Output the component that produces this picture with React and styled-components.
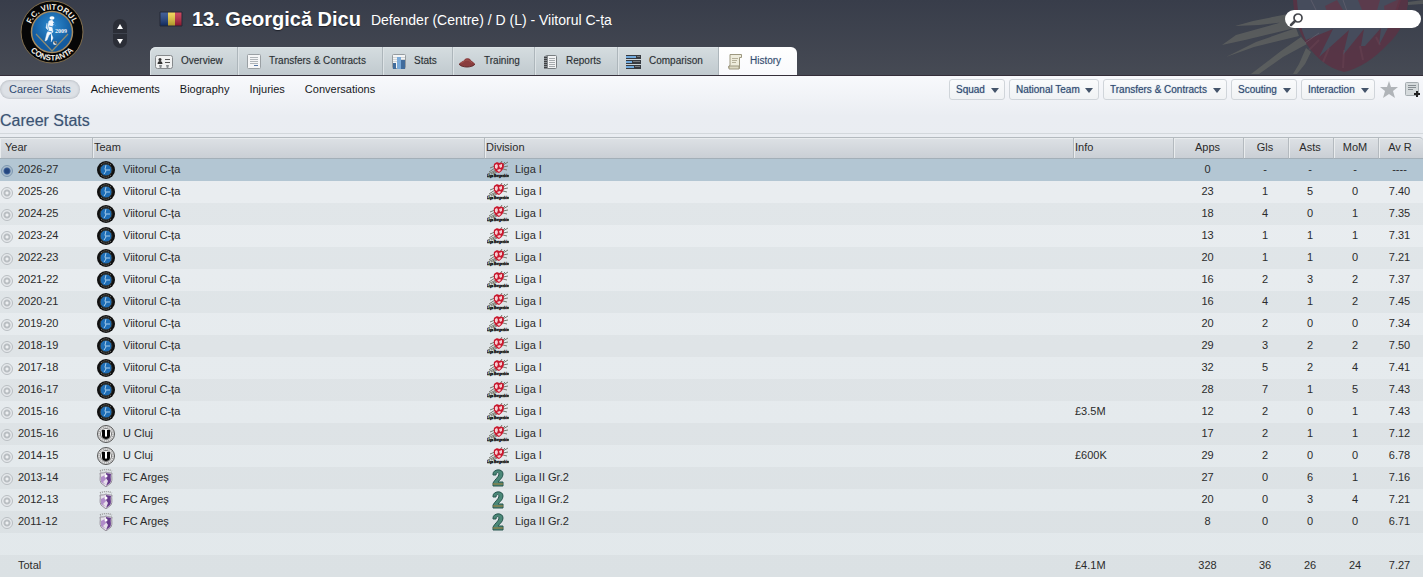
import React, { useState } from "react";
import styled, { createGlobalStyle, ThemeProvider } from "styled-components";

const theme = {
    colors: {
        text: "#2b2b2b",
        link: "#2f4b73",
        selected: "#b3c6d3",
        line: "#b4babf",
    },
};

const GlobalStyle = createGlobalStyle`
    * {
        box-sizing: border-box;
    }
    body {
        margin: 0;
        font-family: "Liberation Sans", Arial, sans-serif;
        font-size: 11px;
        color: ${theme.colors.text};
        background: #e2e8eb;
    }
    button, input, select {
        font-family: inherit;
    }
`;

const Header = styled.header`
    position: relative;
    display: flex;
    height: 76px;
    overflow: hidden;
    background: linear-gradient(#383d4a, #464a54);
    border-bottom: 1px solid #352f3a;
`;

const HeaderArt = styled.svg`
    position: absolute;
    top: 0;
    right: 0;
`;

const ClubLogo = styled.div`
    width: 64px;
    margin-left: 20px;
`;

const Stepper = styled.div`
    display: flex;
    flex-direction: column;
    gap: 1px;
    width: 14px;
    margin: 19px 23px 0 29px;
`;

const StepButton = styled.button`
    display: flex;
    align-items: center;
    justify-content: center;
    height: 14px;
    padding: 0;
    border: 0;
    background: #2b2e37;
    border-radius: ${({ $down }) => ($down ? "0 0 7px 7px" : "7px 7px 0 0")};
`;

const HeaderMain = styled.div`
    display: flex;
    flex: 1;
    flex-direction: column;
    justify-content: space-between;
    height: 76px;
`;

const TitleRow = styled.div`
    display: flex;
    align-items: center;
    height: 38px;
    padding-left: 9px;
    color: #fff;
    white-space: nowrap;
`;

const PlayerName = styled.h1`
    margin: 0 10px 0 9px;
    font-size: 20px;
    line-height: 24px;
    text-shadow: 0 1px 1px #1d2029;
`;

const PlayerRole = styled.span`
    padding-top: 2px;
    font-size: 14px;
`;

const Tabs = styled.nav`
    display: flex;
    height: 29px;
`;

const Tab = styled.a`
    display: flex;
    align-items: center;
    gap: 6px;
    min-width: ${({ $width }) => $width}px;
    padding: 0 12px 0 5px;
    font-size: 10px;
    text-decoration: none;
    white-space: nowrap;
    text-shadow: 0 0 1px #2b2b2b44;
    color: ${({ $active, theme }) => ($active ? theme.colors.link : "#292e33")};
    background: ${({ $active }) =>
        $active ? "linear-gradient(#ffffff, #f8f9fc)" : "linear-gradient(#d5dde0, #c0c9ce)"};
    border-right: ${({ $active }) => ($active ? "0" : "1px solid #adb6bb")};
    box-shadow: ${({ $active }) => ($active ? "none" : "inset 1px 1px 0 #dde3e6")};
    &:first-child {
        border-top-left-radius: 6px;
    }
    &:last-child {
        border-top-right-radius: 6px;
    }
    svg {
        flex: none;
    }
    span {
        padding-bottom: 2px;
    }
`;

const Search = styled.label`
    position: relative;
    display: flex;
    align-items: center;
    width: 136px;
    height: 18px;
    margin: 10px 2px 0 0;
    padding-left: 4px;
    border-radius: 9px;
    background: #fff;
`;

const SearchInput = styled.input`
    flex: 1;
    min-width: 0;
    height: 16px;
    padding: 0 8px 0 4px;
    border: 0;
    outline: 0;
    background: transparent;
    font-size: 11px;
`;

const Content = styled.main`
    background: linear-gradient(#f8f9fc 0, #eaedf2 40px, #e9edf0 120px, #e2e8eb 500px);
`;

const Toolbar = styled.div`
    display: flex;
    align-items: center;
    justify-content: space-between;
    height: 27px;
`;

const SubNav = styled.nav`
    display: flex;
    gap: 2px;
`;

const SubLink = styled.a`
    padding: 0 9px;
    border-radius: 10px;
    font-size: 11px;
    line-height: 19px;
    text-decoration: none;
    white-space: nowrap;
    color: ${({ $active, theme }) => ($active ? theme.colors.link : "#16181b")};
    background: ${({ $active }) => ($active ? "#dde1e6" : "transparent")};
    box-shadow: ${({ $active }) => ($active ? "inset 0 0 3px #a9aeb5" : "none")};
`;

const Actions = styled.div`
    display: flex;
    align-items: center;
    gap: 4px;
`;

const MenuBox = styled.label`
    position: relative;
    width: ${({ $width }) => $width}px;
    svg {
        position: absolute;
        top: 9px;
        right: 6px;
        pointer-events: none;
    }
`;

const MenuSelect = styled.select`
    display: block;
    width: 100%;
    height: 21px;
    padding: 0 16px 1px 6px;
    appearance: none;
    border: 1px solid #d0d5da;
    border-radius: 3px;
    background: linear-gradient(#fafbfc, #f0f2f4);
    font-size: 10px;
    color: ${({ theme }) => theme.colors.link};
    text-shadow: 0 0 1px #2f4b7388;
`;

const IconButton = styled.button`
    display: flex;
    justify-content: center;
    width: 20px;
    padding: 0;
    border: 0;
    background: none;
`;

const SectionTitle = styled.h2`
    height: 31px;
    margin: 0 0 3px;
    border-bottom: 1px solid #d3d8dc;
    font-size: 16px;
    font-weight: 400;
    line-height: 35px;
    color: #3b5374;
    text-shadow: 0 0 1px #3b537466;
`;

const StatsTable = styled.table`
    width: 100%;
    table-layout: fixed;
    border-collapse: separate;
    border-spacing: 0;
`;

const Col = styled.col`
    width: ${({ $width }) => ($width ? `${$width}px` : "auto")};
`;

const HeadCell = styled.th`
    height: 22px;
    padding: 0 ${({ $center }) => ($center ? 2 : 0)}px 2px ${({ $pad = 0 }) => $pad}px;
    font-size: 11px;
    font-weight: 400;
    text-align: ${({ $center }) => ($center ? "center" : "left")};
    background: linear-gradient(#dde1e5, #cacfd5);
    border-top: 1px solid ${({ theme }) => theme.colors.line};
    border-bottom: 1px solid #a3afb8;
    border-right: 1px solid ${({ theme }) => theme.colors.line};
    box-shadow: inset 1px 1px 0 #e9ecee;
    &:last-child {
        border-right: 0;
        border-top-right-radius: 4px;
    }
`;

const Row = styled.tr`
    background: ${({ $selected, $dark, theme }) =>
        $selected ? theme.colors.selected : $dark ? "rgba(60, 65, 75, 0.04)" : "transparent"};
`;

const Cell = styled.td`
    height: 22px;
    padding: 0 ${({ $center }) => ($center ? 3 : 0)}px 2px ${({ $pad = 0 }) => $pad}px;
    text-align: ${({ $center }) => ($center ? "center" : "left")};
    white-space: nowrap;
`;

const Badge = styled.div`
    display: flex;
    align-items: center;
    gap: ${({ $gap }) => $gap}px;
    height: 20px;
    svg {
        position: relative;
        top: 1px;
    }
`;

const YearLabel = styled.label`
    display: flex;
    align-items: center;
    gap: 5px;
    height: 20px;
`;

const Radio = styled.input`
    position: relative;
    top: 2px;
    width: 12px;
    height: 12px;
    margin: 0;
    appearance: none;
    border: 1px solid #b9bec2;
    border-radius: 50%;
    background: radial-gradient(circle, #eef0f2 1px, #b9bec2 2px, #b9bec2 3px, #e6e9ec 4px);
    &:checked {
        border-color: #7d97b0;
        background: radial-gradient(circle, #24467f 2px, #3b5f97 3px, #a9bccb 4px);
    }
`;

const Caret = ({ up, color = "#44546a", size = 8 }) => (
    <svg width={size} height="5" viewBox="0 0 8 5" preserveAspectRatio="none">
        <path d={up ? "M0 5h8L4 0z" : "M0 0h8L4 5z"} fill={color} />
    </svg>
);

const ViitorulCrest = () => (
    <svg width="64" height="65" viewBox="0 0 64 65">
        <defs>
            <radialGradient id="blue" cx="50%" cy="35%">
                <stop offset="0" stopColor="#2f8cd0" />
                <stop offset="1" stopColor="#125a9e" />
            </radialGradient>
            <path id="arcTop" d="M9.500 32a22.500 22.500 0 0 1 45 0" />
            <path id="arcBottom" d="M3.500 32a28.500 28.500 0 0 0 57 0" />
        </defs>
        <circle cx="32" cy="32" r="31" fill="#060606" stroke="#83704f" />
        <circle cx="32" cy="32" r="20.500" fill="url(#blue)" stroke="#a58b61" strokeWidth="1.500" />
        <g fill="#f3efe6" fontFamily="Liberation Sans" fontSize="8" fontWeight="700">
            <text textAnchor="middle">
                <textPath href="#arcTop" startOffset="50%">F.C. VIITORUL</textPath>
            </text>
            <text textAnchor="middle">
                <textPath href="#arcBottom" startOffset="50%">CONSTANTA</textPath>
            </text>
        </g>
        <path d="M16 34l16 17 16-17" fill="none" stroke="#8c8a72" strokeWidth="1.200" />
        <ellipse cx="32" cy="18" rx="2.500" ry="1.700" fill="#fff" />
        <path
            d="M29 21l3-1 2 3-2 4 1 5-4 3-2 5-2 1 2-8 2-3-1-5zM27 23l-1 5 2 2M31 33l2 5-2 4"
            fill="#f4f8fc"
            stroke="#f4f8fc"
            strokeWidth=".5"
        />
        <path d="M33 23l3 3M28 31l4 1M29 26l4 1" stroke="#408ed0" />
        <circle cx="35" cy="43" r="2" fill="#d9dde0" />
        <path d="M34 42h2v2" stroke="#222" fill="none" />
        <text x="35" y="33" fill="#f2f6fa" fontFamily="Liberation Serif" fontSize="6" fontWeight="700">2009</text>
    </svg>
);

const HeaderCrest = () => (
    <HeaderArt width="208" height="76" viewBox="0 0 208 76" aria-hidden="true">
        <path
            d="M20 26l18-5 40-8 1 8-35 4zM7 45l14-10 57-16 2 9-50 12zM11 57l30-15 40-14 3 8-45 11zM36 74l30-23 20-14 6 7-24 13-24 17zM78 74l6-10 7-16 5 4-6 12-8 10z"
            fill="#6e7068"
            opacity=".55"
        />
        <path d="M193 2l15-2v4l-15 1z" fill="#6e7068" opacity=".5" />
        <path
            d="M78 0h115c0 16-8 34-21 45-12 13-28 24-43 27-17-4-32-17-41-34-6-12-9-24-10-38z"
            fill="#5b3344"
            opacity=".85"
        />
        <path
            d="M92 0h92l-8 22-12 23 2-17-16 18-4 0 3-17-21 26 6-25-30 27 14-28-27 11c-5-10-8-24-9-40z"
            fill="#464c5c"
        />
        <path d="M143 0h22l-4 14-14-4zM169 6l13-6h4l-6 18-9 5zM110 6l12-6 6 10-14 8z" fill="#643446" opacity=".7" />
        <path d="M94 50l10-10M108 62l6-14M128 68l1-18M148 60l-3-14M165 45l-4-8" stroke="#7b5260" strokeWidth="2" opacity=".25" />
        <path d="M90 43l14-10M96 0l6 12M128 0l5 14" stroke="#7a7480" fill="none" opacity=".4" />
    </HeaderArt>
);

const Flag = () => (
    <svg width="24" height="16" viewBox="0 0 24 16">
        <defs>
            <linearGradient id="shine" x2="0" y2="1">
                <stop offset="0" stopColor="#fff" stopOpacity=".2" />
                <stop offset="1" stopColor="#000" stopOpacity=".3" />
            </linearGradient>
        </defs>
        <path d="M1 1h8v14H1z" fill="#173a80" />
        <path d="M9 1h7v14H9z" fill="#f2cf38" />
        <path d="M16 1h7v14h-7z" fill="#c01e3c" />
        <path d="M1 1h22v14H1z" fill="url(#shine)" stroke="#242836" />
    </svg>
);

const tabIcons = {
    overview: (
        <>
            <rect x=".5" y="3.500" width="17" height="13" rx="2" fill="#f1f2f2" stroke="#85898c" />
            <circle cx="5" cy="7.500" r="1.500" fill="#333" />
            <path d="M2.500 12c0-4 5-4 5 0z" fill="#333" />
            <path d="M10 7.500h5M10 10.500h5" stroke="#555" />
            <path d="M4 13h3l-1 4H5zM11 13h3l-1 4h-1z" fill="#888d90" />
        </>
    ),
    transfers: (
        <>
            <rect x="4.500" y="2.500" width="13" height="14" rx="1" fill="#f5f6f7" stroke="#9aa0a4" />
            <path d="M7 5.500h8M7 7.500h8M7 9.500h8M7 11.500h8" stroke="#b0b5b9" />
            <path d="M11 13.500h4" stroke="#5778a6" />
        </>
    ),
    stats: (
        <>
            <rect x="4.500" y="2.500" width="13" height="14" rx="1" fill="#f4f5f6" stroke="#959b9f" />
            <path d="M5 5.500h12M5 7.500h12M5 9.500h12" stroke="#d0d4d6" />
            <path d="M5 11h3v6H5zM13 8h4v9h-4z" fill="#416c9c" />
            <path d="M9 5h4v12H9z" fill="#79a9d8" />
        </>
    ),
    training: (
        <>
            <path d="M1 12c2-3 4-2 6-5 1-1 4-1 5 0 2 3 3 2 5 5 0 4-16 4-16 0z" fill="#8a3d3e" />
            <path d="M3 11c3-1 4-3 6-3s4 2 5 3" stroke="#a3544f" fill="none" />
            <path d="M1 12c3 4 13 4 16 0" stroke="#623032" fill="none" />
        </>
    ),
    reports: (
        <>
            <rect x="5.500" y="3.500" width="11" height="13" rx="1" fill="#f2f3f4" stroke="#777d80" />
            <path d="M4 4h4v13H4z" fill="#84898d" />
            <path d="M4 5.500h3M4 7.500h3M4 9.500h3M4 11.500h3M4 13.500h3M4 15.500h3" stroke="#3e4144" />
            <path d="M9 6.500h6M9 8.500h6M9 10.500h6M9 12.500h6M9 14.500h6" stroke="#a5aaad" />
        </>
    ),
    comparison: (
        <>
            <path d="M3 3h15v4H3zM3 8h15v4H3zM3 13h15v4H3z" fill="#373a40" />
            <path d="M3 4h10v2H3zM3 9h6v2H3zM3 14h8v2H3z" fill="#71a9dc" />
            <path d="M14 4h3v1h-3zM10 9h7v1h-7zM12 14h5v1h-5z" fill="#75797e" />
        </>
    ),
    history: (
        <>
            <path d="M6 2.500h11.500v3h-2v11H6c-2 0-2-3 0-3z" fill="#eeecdc" stroke="#9d9880" />
            <path d="M5 14h10v3H5z" fill="#dcd8c2" stroke="#9d9880" />
            <path d="M8 6.500h6M8 8.500h5M8 10.500h4" stroke="#b5b09a" />
        </>
    ),
};

const ViitorulIcon = () => (
    <svg width="18" height="18" viewBox="0 0 18 18">
        <circle cx="9" cy="9" r="9" fill="#101010" />
        <path d="M4 4c3-3 7-3 10 0M4 14c3 3 7 3 10 0" fill="none" stroke="#8a857c" strokeDasharray="1 1" />
        <circle cx="9" cy="9" r="6" fill="#1e6db5" stroke="#33342f" />
        <path d="M9 4l-1 4 1 2-2 3M9 9h4" stroke="#a9d0ee" fill="none" />
    </svg>
);

const ClujIcon = () => (
    <svg width="18" height="18" viewBox="0 0 18 18">
        <circle cx="9" cy="9" r="8.500" fill="#e3e3e3" stroke="#555" />
        <circle cx="9" cy="9" r="7" fill="none" stroke="#888" strokeDasharray="1 1" />
        <circle cx="9" cy="9" r="5.500" fill="#fff" stroke="#777" />
        <path d="M5 5h3v6c0 1 2 1 2 0V5h3v6c0 4-8 4-8 0z" fill="#050505" />
    </svg>
);

const ArgesIcon = () => (
    <svg width="18" height="18" viewBox="0 0 18 18">
        <path d="M3 2c4-2 8-2 12 0" stroke="#999" strokeWidth="1.500" strokeDasharray="1 1" fill="none" />
        <path d="M3 4c3 0 4 0 6-1 2 1 4 1 6 1-1 4 1 6-1 10l-5 4-5-4C2 10 4 8 3 4z" fill="#e6e0ea" stroke="#958f9a" />
        <path d="M9 4l5 1c-1 4 1 6-1 9l-4 3 2-5-2-3z" fill="#663b8b" />
        <path d="M4 8l4-2 1 4-3 3 3 3-5-3zM6 7l2-2" fill="#b08cc9" />
        <circle cx="9" cy="7" r="1.500" fill="#fff" />
    </svg>
);

const LigaOneIcon = () => (
    <svg width="22" height="18" viewBox="0 0 22 18">
        <path
            d="M8 5L3 7M8 7l-6 4M9 9l-8 4M9 10l-5 3M10 11l-4 2M13 3l2-3M15 4l3-3M16 4l5-3M16 6l5-1M16 8l4 1"
            stroke="#75776c"
            fill="none"
        />
        <path d="M7 3c2-2 4-2 5-1 2-1 4-1 5 2 0 4-2 6-5 8-4-1-6-5-5-9z" fill="#c9182e" />
        <path d="M8 4l2-1 1 2-1 3-2-1zM12 4l3-1v3l-2 1zM10 9l3-1 1 1-2 2z" fill="#f4cfd3" />
        <text x="0" y="16" fontFamily="Liberation Sans" fontSize="3" fontWeight="700" fill="#111" stroke="#111" strokeWidth=".3">
            Liga Bergenbier
        </text>
    </svg>
);

const LigaTwoIcon = () => (
    <svg width="22" height="18" viewBox="0 0 22 18">
        <path
            d="M6 5c0-5 10-6 10 0 0 4-3 5-5 8h5v4H6v-3c2-4 6-6 6-9 0-2-3-2-3 1H6z"
            fill="#4b8878"
            stroke="#28564f"
        />
        <path d="M6 15h10" stroke="#a47c35" />
    </svg>
);

const clubs = {
    v: ["Viitorul C-ța", ViitorulIcon],
    u: ["U Cluj", ClujIcon],
    a: ["FC Argeș", ArgesIcon],
};

const tabs = [
    ["overview", "Overview", 88],
    ["transfers", "Transfers & Contracts", 145],
    ["stats", "Stats", 70],
    ["training", "Training", 82],
    ["reports", "Reports", 83],
    ["comparison", "Comparison", 101],
    ["history", "History", 78],
];

const subLinks = ["Career Stats", "Achievements", "Biography", "Injuries", "Conversations"];

const menus = [
    ["Squad", 56],
    ["National Team", 90],
    ["Transfers & Contracts", 124],
    ["Scouting", 66],
    ["Interaction", 74],
];

// year, club, info, apps, goals, assists, man of the match, average rating
const seasons = [
    ["2026-27", "v", "", "0", "-", "-", "-", "----"],
    ["2025-26", "v", "", 23, 1, 5, 0, "7.40"],
    ["2024-25", "v", "", 18, 4, 0, 1, "7.35"],
    ["2023-24", "v", "", 13, 1, 1, 1, "7.31"],
    ["2022-23", "v", "", 20, 1, 1, 0, "7.21"],
    ["2021-22", "v", "", 16, 2, 3, 2, "7.37"],
    ["2020-21", "v", "", 16, 4, 1, 2, "7.45"],
    ["2019-20", "v", "", 20, 2, 0, 0, "7.34"],
    ["2018-19", "v", "", 29, 3, 2, 2, "7.50"],
    ["2017-18", "v", "", 32, 5, 2, 4, "7.41"],
    ["2016-17", "v", "", 28, 7, 1, 5, "7.43"],
    ["2015-16", "v", "£3.5M", 12, 2, 0, 1, "7.43"],
    ["2015-16", "u", "", 17, 2, 1, 1, "7.12"],
    ["2014-15", "u", "£600K", 29, 2, 0, 0, "6.78"],
    ["2013-14", "a", "", 27, 0, 6, 1, "7.16"],
    ["2012-13", "a", "", 20, 0, 3, 4, "7.21"],
    ["2011-12", "a", "", 8, 0, 0, 0, "6.71"],
];

const totals = [328, 36, 26, 24, "7.27"];

const SeasonRow = ({ season, index, selected, onSelect }) => {
    const [year, club, info, ...numbers] = season;
    const [clubName, ClubIcon] = clubs[club];
    const secondLeague = club === "a";
    return (
        <Row $selected={selected} $dark={index % 2 === 0}>
            <Cell $pad={1}>
                <YearLabel>
                    <Radio type="radio" name="season" checked={selected} onChange={() => onSelect(index)} />
                    {year}
                </YearLabel>
            </Cell>
            <Cell $pad={4}>
                <Badge $gap={8}>
                    <ClubIcon />
                    {clubName}
                </Badge>
            </Cell>
            <Cell $pad={2}>
                <Badge $gap={6}>
                    {secondLeague ? <LigaTwoIcon /> : <LigaOneIcon />}
                    {secondLeague ? "Liga II Gr.2" : "Liga I"}
                </Badge>
            </Cell>
            <Cell $pad={1}>{info}</Cell>
            {numbers.map((n, i) => (
                <Cell key={i} $center>
                    {n}
                </Cell>
            ))}
        </Row>
    );
};

export default function App() {
    const [selected, setSelected] = useState(0);

    return (
        <ThemeProvider theme={theme}>
            <GlobalStyle />
            {/* PLAYER HEADER */}
            <Header>
                <HeaderCrest />
                <ClubLogo>
                    <ViitorulCrest />
                </ClubLogo>
                <Stepper>
                    <StepButton aria-label="Previous player">
                        <Caret up color="#fff" size={6} />
                    </StepButton>
                    <StepButton $down aria-label="Next player">
                        <Caret color="#fff" size={6} />
                    </StepButton>
                </Stepper>
                <HeaderMain>
                    <TitleRow>
                        <Flag />
                        <PlayerName>13. Georgică Dicu</PlayerName>
                        <PlayerRole>Defender (Centre) / D (L) - Viitorul C-ța</PlayerRole>
                    </TitleRow>
                    <Tabs>
                        {tabs.map(([id, label, width]) => (
                            <Tab key={id} href={`#${id}`} $width={width} $active={id === "history"}>
                                <svg width="20" height="20" viewBox="0 0 20 20">
                                    {tabIcons[id]}
                                </svg>
                                <span>{label}</span>
                            </Tab>
                        ))}
                    </Tabs>
                </HeaderMain>
                <Search>
                    <svg width="15" height="15" viewBox="0 0 15 15" fill="none" stroke="#44464c">
                        <circle cx="9" cy="6" r="4" strokeWidth="1.700" />
                        <path d="M6 9l-4 4" strokeWidth="2.500" strokeLinecap="round" />
                    </svg>
                    <SearchInput type="search" aria-label="Search" />
                </Search>
            </Header>

            <Content>
                {/* SUB NAVIGATION + MENUS */}
                <Toolbar>
                    <SubNav>
                        {subLinks.map((label, i) => (
                            <SubLink key={label} href="#history" $active={i === 0}>
                                {label}
                            </SubLink>
                        ))}
                    </SubNav>
                    <Actions>
                        {menus.map(([label, width]) => (
                            <MenuBox key={label} $width={width}>
                                <MenuSelect aria-label={label}>
                                    <option>{label}</option>
                                </MenuSelect>
                                <Caret />
                            </MenuBox>
                        ))}
                        <IconButton aria-label="Favourite">
                            <svg width="18" height="18" viewBox="0 0 18 18">
                                <path d="M9 0l2 6h7l-5 4 2 7-6-4-6 4 2-7-5-4h7z" fill="#b0b4b8" />
                            </svg>
                        </IconButton>
                        <IconButton aria-label="Add note">
                            <svg width="16" height="18" viewBox="0 0 16 18">
                                <rect x=".5" y="1.500" width="13" height="13" rx="1" fill="#d5dadc" stroke="#a5acb0" />
                                <path d="M3 4.500h8M3 6.500h8M3 8.500h5" stroke="#868d92" />
                                <path d="M12 10v6M9 13h6" stroke="#222" strokeWidth="2" />
                            </svg>
                        </IconButton>
                    </Actions>
                </Toolbar>

                <SectionTitle>Career Stats</SectionTitle>

                {/* SEASONS */}
                <StatsTable>
                    <colgroup>
                        {[93, 392, 0, 100, 70, 45, 45, 45, 44].map((width, i) => (
                            <Col key={i} $width={width} />
                        ))}
                    </colgroup>
                    <thead>
                        <tr>
                            <HeadCell $pad={5}>Year</HeadCell>
                            <HeadCell $pad={1}>Team</HeadCell>
                            <HeadCell $pad={1}>Division</HeadCell>
                            <HeadCell $pad={1}>Info</HeadCell>
                            {["Apps", "Gls", "Asts", "MoM", "Av R"].map((name) => (
                                <HeadCell key={name} $center>
                                    {name}
                                </HeadCell>
                            ))}
                        </tr>
                    </thead>
                    <tbody>
                        {seasons.map((season, i) => (
                            <SeasonRow
                                key={i}
                                season={season}
                                index={i}
                                selected={selected === i}
                                onSelect={setSelected}
                            />
                        ))}
                        <Row>
                            <Cell colSpan={9} />
                        </Row>
                    </tbody>
                    <tfoot>
                        <Row $dark>
                            <Cell $pad={18}>Total</Cell>
                            <Cell />
                            <Cell />
                            <Cell $pad={1}>£4.1M</Cell>
                            {totals.map((n, i) => (
                                <Cell key={i} $center>
                                    {n}
                                </Cell>
                            ))}
                        </Row>
                    </tfoot>
                </StatsTable>
            </Content>
        </ThemeProvider>
    );
}
